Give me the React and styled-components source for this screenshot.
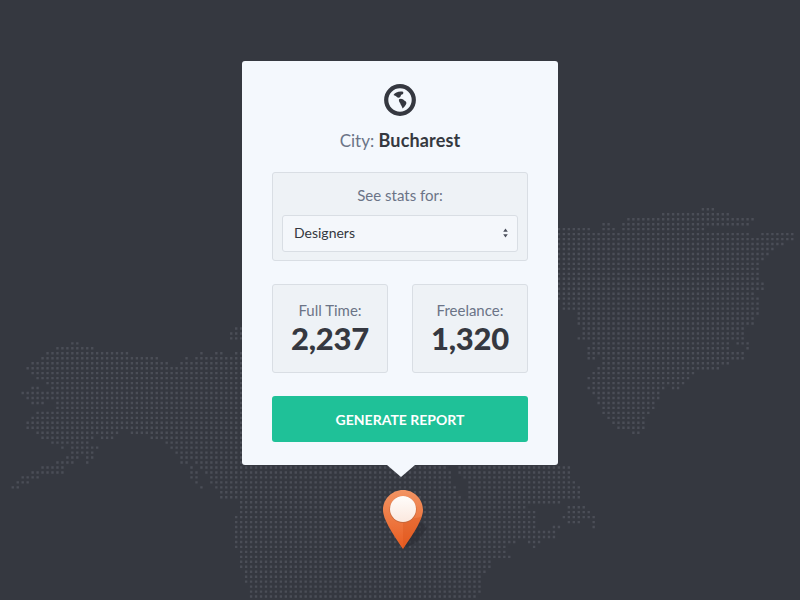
import React from "react"
import styled, {createGlobalStyle} from "styled-components"

const GlobalStyle=createGlobalStyle`
    html, body{
        margin:0;
        padding:0;
        background-color:#353840;
    }
`

// dotted map, one row per line: [y, from, to, from, to...]
const leftLand=[
    [328,237,240],[333,232,240],[338,232,240],
    [343,73,78],[348,58,93],[353,48,128,202,202,217,222,237,240],[358,43,158,187,187,197,240],
    [363,33,168,182,240],[368,28,240],[373,33,240],[378,38,240],[383,48,240],
    [388,33,38,53,240],[393,23,240],[398,28,240],[403,33,43,58,240],[408,58,240],
    [413,38,240],[418,33,240],[423,28,240],[428,28,240],[433,38,118,132,240],
    [438,43,92,102,113,152,240],[443,53,88,167,240],[448,63,63,73,98,172,240],[453,73,93,177,240],
    [458,68,78,88,93,182,240],[463,58,73,88,88,182,188,197,240],
    [468,43,63,192,192,202,240],[473,33,63,192,197,207,240],[478,23,38,192,197,212,240],
    [483,18,28,197,197,212,240],[488,13,18,202,202,217,240],[493,222,240],[498,222,240],
]

const rightLand=[
    [209,703,715],[214,663,730],[219,629,755],[224,605,610,624,750],
    [229,560,590,605,615,624,705],[234,560,750,763,795],[239,560,795],[244,560,785],
    [249,560,775],[254,560,770],[259,560,765],[264,560,760],[269,560,760],[274,560,760],
    [279,560,760],[284,560,765],[289,560,765],[294,560,755],[299,560,760],[304,565,760],
    [309,565,760],[314,580,760],[319,580,755],[324,580,755],[329,585,745],[334,585,745],
    [339,580,745],[344,595,730,738,750],[349,590,730,745,750],[354,590,745],
    [359,590,595,605,745],[364,605,730],[369,600,720],[374,595,695],[379,590,690],
    [384,595,685],[389,590,665,675,680],[394,595,660],[399,600,660],[404,600,655],
    [409,605,655],[414,605,650],[419,610,645],[424,615,645],[429,620,645],[434,635,640],
]

const bottomLand=[
    [467,240,447,460,567],[472,240,450,460,567],[477,240,452,462,570],[482,240,452,470,575],
    [487,240,455,470,580],[492,240,457,470,580],[497,240,460,468,580],[502,240,560],
    [507,240,527,570,585],[512,240,535,570,590],[517,237,535,565,595],[522,237,535,570,580,595,595],
    [527,237,535,555,560,595,595],[532,237,555],[537,237,555],[542,237,515,530,540],
    [547,237,507,535,535],[552,240,507],[557,242,512],[562,242,492],[567,242,492],
    [572,247,487],[577,247,482],[582,247,482],[587,252,482],[592,252,482],[597,252,477],
]

const PITCH=4.965
const ORIGIN_X=2.84
const ORIGIN_Y=209.3

const dotsFor=(rows)=>{
    let d=""
    for(let k=0;k<82;k++){
        const y=ORIGIN_Y+k*PITCH
        const row=rows.find(r=>Math.abs(r[0]-y)<=2.5)
        if(!row) continue
        for(let i=0;i<160;i++){
            const x=ORIGIN_X+i*PITCH
            for(let r=1;r<row.length;r+=2){
                if(x>=row[r]-2 && x<=row[r+1]+2){
                    d+=`M${(x-1.2).toFixed(2)} ${(y-1.2).toFixed(2)}h2.4v2.4h-2.4z`
                    break
                }
            }
        }
    }
    return d
}

const mapPath=[leftLand,rightLand,bottomLand].map(dotsFor).join("")

const Scene=styled.div`
    position:relative;
    width:100%;
    height:600px;
    overflow:hidden;
    padding-top:61px;
    box-sizing:border-box;
    display:flex;
    flex-direction:column;
    align-items:center;
    background-color:#353840;
    font-family:"Lato","Open Sans",sans-serif;
`

const MapLayer=styled.svg`
    position:absolute;
    left:0;
    top:0;
`

const Card=styled.div`
    position:relative;
    box-sizing:border-box;
    width:316px;
    height:404px;
    padding:23px 30px 0;
    border-radius:3px;
    background-color:#f4f8fd;
    display:flex;
    flex-direction:column;
    align-items:center;
    &::after{
        content:"";
        position:absolute;
        left:145px;
        bottom:-12px;
        border-left:14px solid transparent;
        border-right:14px solid transparent;
        border-top:12px solid #f4f8fd;
    }
`

const City=styled.div`
    margin-top:12px;
    height:24px;
    line-height:24px;
    font-size:17px;
    color:#6b7487;
    b{
        font-size:18px;
        letter-spacing:.15px;
        font-weight:700;
        color:#353840;
    }
`

const Panel=styled.div`
    box-sizing:border-box;
    border:1px solid #d9dee4;
    border-radius:3px;
    background-color:#eef2f6;
    text-align:center;
`

const StatsPanel=styled(Panel)`
    width:256px;
    height:89px;
    margin-top:20px;
    padding:12px 9px 0;
`

const Label=styled.div`
    height:20px;
    line-height:20px;
    font-size:15px;
    color:#6b7487;
`

const SelectWrap=styled.div`
    position:relative;
    margin-top:10px;
    svg{
        position:absolute;
        right:10px;
        top:13px;
        pointer-events:none;
    }
`

const Select=styled.select`
    display:block;
    box-sizing:border-box;
    width:100%;
    height:37px;
    padding:0 11px 3px;
    border:1px solid #d9dee4;
    border-radius:3px;
    background-color:#f4f7fb;
    appearance:none;
    font-family:inherit;
    font-size:14px;
    color:#353840;
`

const StatsRow=styled.div`
    width:256px;
    margin-top:23px;
    display:flex;
    justify-content:space-between;
`

const StatBox=styled(Panel)`
    width:116px;
    height:89px;
    padding-top:15px;
`

const StatValue=styled.div`
    margin-top:0;
    height:36px;
    line-height:36px;
    font-size:31px;
    font-weight:900;
    letter-spacing:-.3px;
    color:#353840;
`

const GenerateButton=styled.button`
    width:256px;
    height:46px;
    margin-top:23px;
    padding:0;
    border:none;
    border-radius:3px;
    background-color:#1fc198;
    color:#fff;
    font-family:inherit;
    font-size:14px;
    font-weight:700;
    text-transform:uppercase;
`

const PinMark=styled.svg`
    position:relative;
    flex:none;
    margin:25px 0 0 6px;
    overflow:visible;
`

const Globe=()=>(
    <svg width="32" height="32" viewBox="0 0 32 32">
        <circle cx="16" cy="16" r="13.8" fill="none" stroke="#353840" strokeWidth="4.2"/>
        <path d="M9.5 11 C11 8.5 15 7 19 7.8 C20 9.5 18.5 10.8 17 10.8 C17 12.5 15.8 14.2 13.5 13.6 C12.5 12.2 11 11.6 9.5 11z" fill="#353840"/>
        <path d="M15 15.2 C17 14 19.2 15 20.2 16.5 C22.4 17.3 23 19 21.8 20.8 C20.8 22 20.2 23.4 18.6 24.4 C18 22.2 16.6 20.8 16.2 19.2 C15.2 18 14.6 16.4 15 15.2z" fill="#353840"/>
    </svg>
)

const Arrows=()=>(
    <svg width="5" height="10" viewBox="0 0 5 10">
        <path d="M2.5 .5L4.8 3.8H.2zM2.5 9.5L.2 6.2h4.6z" fill="#4b505c"/>
    </svg>
)

const Pin=()=>(
    <PinMark width="40" height="59" viewBox="0 0 40 59">
        <defs>
            <linearGradient id="pinBody" x1="0" y1="0" x2="0" y2="1">
                <stop offset="0" stopColor="#f29463"/>
                <stop offset="1" stopColor="#e95c20"/>
            </linearGradient>
            <linearGradient id="pinFace" x1="0" y1="0" x2="0" y2="1">
                <stop offset="0" stopColor="#fffdfb"/>
                <stop offset="1" stopColor="#fbe8de"/>
            </linearGradient>
        </defs>
        <path d="M36 30L20 59L34 52L44 38z" fill="#2a2c33" opacity="0.55"/>
        <path d="M20 0C31 0 40 9 40 20C40 30 28 47 20 59C12 47 0 30 0 20C0 9 9 0 20 0z" fill="url(#pinBody)"/>
        <path d="M20 30V59C28 47 36 36 38.6 27z" fill="#d9531a" opacity="0.35"/>
        <circle cx="20" cy="19.5" r="13.5" fill="#c7683b"/>
        <circle cx="20" cy="19" r="13" fill="url(#pinFace)"/>
    </PinMark>
)

const App=()=>{
    return(
        <Scene>
            <GlobalStyle/>
            <MapLayer width="800" height="600" viewBox="0 0 800 600">
                <path d={mapPath} fill="#4b4e57"/>
            </MapLayer>
            <Card>
                <Globe/>
                <City>City: <b>Bucharest</b></City>
                <StatsPanel>
                    <Label>See stats for:</Label>
                    <SelectWrap>
                        <Select defaultValue="Designers">
                            <option>Designers</option>
                            <option>Developers</option>
                        </Select>
                        <Arrows/>
                    </SelectWrap>
                </StatsPanel>
                <StatsRow>
                    <StatBox>
                        <Label>Full Time:</Label>
                        <StatValue>2,237</StatValue>
                    </StatBox>
                    <StatBox>
                        <Label>Freelance:</Label>
                        <StatValue>1,320</StatValue>
                    </StatBox>
                </StatsRow>
                <GenerateButton>Generate Report</GenerateButton>
            </Card>
            <Pin/>
        </Scene>
    )
}

export default App
